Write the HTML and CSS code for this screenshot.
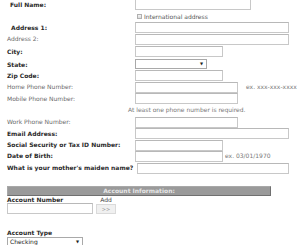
FILE: index.html
```html
<!DOCTYPE html>
<html>
<head>
<meta charset="utf-8">
<link rel="stylesheet" href="styles.css">
</head>
<body>
<div class="form">
  <div class="grid">
    <label class="lbl req ind3">Full Name:</label>
    <input class="fld w116" type="text">

    <span></span>
    <label class="check"><span class="box"></span>International address</label>

    <label class="lbl req ind4">Address 1:</label>
    <input class="fld w154" type="text">

    <label class="lbl opt">Address 2:</label>
    <input class="fld w154" type="text">

    <label class="lbl req">City:</label>
    <input class="fld w88" type="text">

    <label class="lbl req">State:</label>
    <span class="sel w72 h10"><span class="arrow">▼</span></span>

    <label class="lbl req">Zip Code:</label>
    <input class="fld w88" type="text">

    <label class="lbl opt">Home Phone Number:</label>
    <span class="withhint"><input class="fld w103" type="text"><span class="hint">ex. xxx-xxx-xxxx</span></span>

    <label class="lbl opt">Mobile Phone Number:</label>
    <input class="fld w103" type="text">

    <span></span>
    <span class="note">At least one phone number is required.</span>

    <label class="lbl opt">Work Phone Number:</label>
    <input class="fld w103" type="text">

    <label class="lbl req">Email Address:</label>
    <input class="fld w154" type="text">

    <label class="lbl req">Social Security or Tax ID Number:</label>
    <input class="fld w88" type="text">

    <label class="lbl req">Date of Birth:</label>
    <span class="withhint"><input class="fld w88" type="text"><span class="hint dob">ex. 03/01/1970</span></span>

    <label class="lbl req nowrap">What is your mother's maiden name?</label>
    <input class="fld w152 shift" type="text">
  </div>

  <div class="section">Account Information:</div>

  <div class="acct">
    <span class="lbl req">Account Number</span>
    <span class="add">Add</span>
    <input class="fld w86" type="text">
    <span class="btn">&gt;&gt;</span>
  </div>

  <div class="type">
    <div class="lbl req">Account Type</div>
    <span class="sel w76 h11"><span class="seltext">Checking</span><span class="arrow">▼</span></span>
  </div>
</div>
</body>
</html>
```

FILE: styles.css
```css
* { box-sizing: border-box; }
html, body { margin: 0; padding: 0; background: #fff; }
body {
  font-family: "DejaVu Sans", Verdana, sans-serif;
  font-size: 6px;
  line-height: 1;
  color: #333;
  overflow: hidden;
}
.form { padding: 0 7px; margin-top: -1px; }

.grid {
  display: grid;
  grid-template-columns: 128px 1fr;
  grid-template-rows: 11.5px 11.5px 11.5px 12.5px 13px 11px 11.5px 11.5px 11.5px 12px 11.5px 11.5px 11px 12px 11px;
  align-items: start;
}
.lbl { display: flex; align-items: center; height: 11px; white-space: nowrap; }
.req { font-weight: bold; color: #2a2a2a; }
.opt { color: #6a6a6a; }
.ind3 { padding-left: 3px; }
.ind4 { padding-left: 4px; }
.nowrap { white-space: nowrap; }

.fld {
  display: block;
  height: 11px;
  margin: 0;
  padding: 0;
  border: 1px solid #c8c8c8;
  border-top-color: #b8b8b8;
  background: #fff;
  font: inherit;
}
.w116 { width: 116px; }
.w154 { width: 154px; }
.w152 { width: 152px; }
.w88 { width: 88px; }
.w103 { width: 103px; }
.w72 { width: 72px; }
.w86 { width: 86px; }
.w76 { width: 76px; }
.shift { margin-left: 2px; }

.check {
  display: flex;
  align-items: center;
  height: 11px;
  color: #555;
  padding-left: 2px;
  padding-top: 1px;
  white-space: nowrap;
}
.box {
  width: 5px;
  height: 5px;
  border: 1px solid #b0b0b0;
  background: linear-gradient(#f4f4f4, #dcdcdc);
  margin-right: 2px;
}

.sel {
  position: relative;
  display: flex;
  align-items: center;
  border: 1px solid #a9a9a9;
  background: #fff;
}
.h10 { height: 10px; }
.h11 { height: 10px; }
.arrow {
  position: absolute;
  right: 3px;
  top: 2px;
  font-size: 4px;
  color: #222;
}
.seltext { padding-left: 2px; color: #222; }

.withhint { display: flex; align-items: center; white-space: nowrap; }
.hint { color: #777; margin-left: 8px; white-space: nowrap; flex-shrink: 0; }
.hint.dob { margin-left: 2px; }

.note {
  display: flex;
  align-items: center;
  height: 11px;
  margin-left: -7px;
  color: #777;
  white-space: nowrap;
}

.section {
  margin-top: 12.5px;
  width: 264px;
  height: 10px;
  background: #9a9a9a;
  border: 1px solid;
  border-color: #a8a8a8 #707070 #707070 #a8a8a8;
  color: #e6e6e6;
  font-weight: bold;
  text-align: center;
  line-height: 8px;
}

.acct {
  display: grid;
  grid-template-columns: 86px 20px;
  column-gap: 3px;
  row-gap: 0;
}
.acct .lbl { height: 7px; }
.add { color: #444; height: 7px; display: flex; align-items: center; justify-content: center; }
.btn {
  display: flex;
  align-items: center;
  justify-content: center;
  height: 10px;
  margin-top: 1px;
  border: 1px solid #dadada;
  background: #f0f0f0;
  color: #999;
  font-size: 5px;
}

.type { margin-top: 15px; }
.type .lbl { height: 8px; }
```
